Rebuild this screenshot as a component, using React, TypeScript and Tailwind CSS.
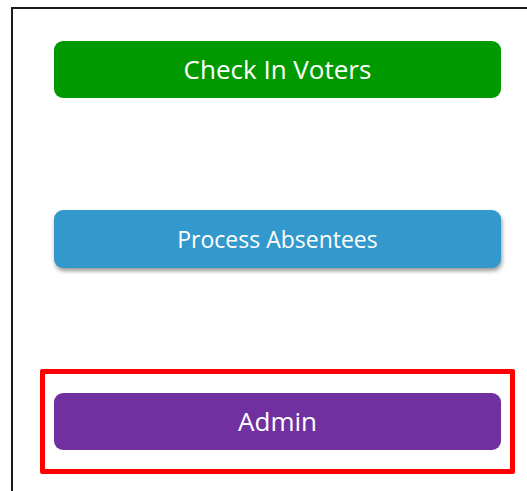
export default function App() {
  return (
    <div className="bg-white w-[527px] h-[491px] pt-[7px] pl-[11px] overflow-hidden" style={{ fontFamily: '"Open Sans", "Noto Sans", sans-serif' }}>
      <div className="h-full border-l-2 border-t-2 border-[#1a1a1a] pl-[27px] pr-[12px] flex flex-col">
        <button className="mt-[32px] mx-[14px] h-[57px] rounded-[9px] bg-[#009a00] text-white text-[26px] flex items-center justify-center">
          Check In Voters
        </button>
        <button className="mt-[112px] mx-[14px] h-[58px] rounded-[9px] bg-[#3399cc] text-white text-[23px] flex items-center justify-center shadow-[1px_3px_4px_rgba(0,0,0,0.4)]">
          Process Absentees
        </button>
        <div className="mt-[101px] border-[5px] border-[#ff0000] rounded-[2px] px-[9px] pt-[19px] pb-[19px]">
          <button className="w-full h-[57px] rounded-[9px] bg-[#7030a0] text-white text-[26px] flex items-center justify-center">
            Admin
          </button>
        </div>
      </div>
    </div>
  );
}
